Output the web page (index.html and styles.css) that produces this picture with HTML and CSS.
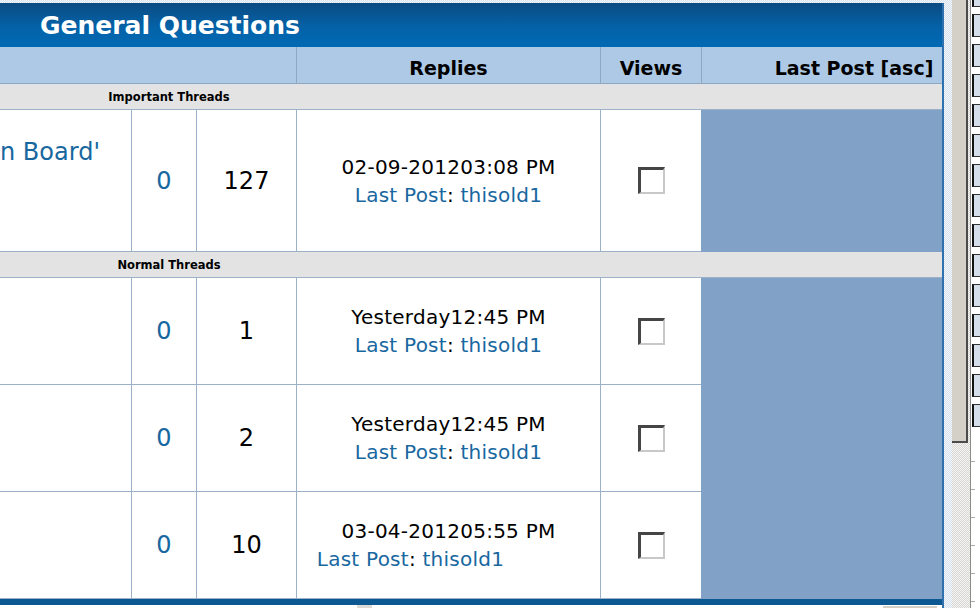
FILE: index.html
```html
<!DOCTYPE html>
<html lang="en">
<head>
    <meta charset="UTF-8">
    <title>General Questions</title>
    <link rel="stylesheet" href="styles.css">
</head>
<body>

<div class="screen">
    <div class="panel">
        <div class="panel-head">
            <h1>General Questions</h1>
        </div>

        <table class="threads">
            <colgroup>
                <col style="width:131px">
                <col style="width:65px">
                <col style="width:100px">
                <col style="width:304px">
                <col style="width:101px">
                <col style="width:241px">
            </colgroup>
            <thead>
                <tr>
                    <th colspan="3"></th>
                    <th>Replies</th>
                    <th>Views</th>
                    <th class="sort">Last Post [asc]</th>
                </tr>
            </thead>
            <tbody>
                <tr class="section">
                    <td colspan="6"><span>Important Threads</span></td>
                </tr>
                <tr class="row row-sticky">
                    <td class="cell title"><a href="#">n Board'</a></td>
                    <td class="cell num"><a href="#">0</a></td>
                    <td class="cell num">127</td>
                    <td class="cell lastpost">
                        <div class="when">02-09-2012<span>03:08 PM</span></div>
                        <div class="by"><a href="#">Last Post</a>: <a href="#">thisold1</a></div>
                    </td>
                    <td class="cell pick"><input type="checkbox"></td>
                    <td class="fill"></td>
                </tr>

                <tr class="section">
                    <td colspan="6"><span>Normal Threads</span></td>
                </tr>
                <tr class="row">
                    <td class="cell title"></td>
                    <td class="cell num"><a href="#">0</a></td>
                    <td class="cell num">1</td>
                    <td class="cell lastpost">
                        <div class="when">Yesterday<span>12:45 PM</span></div>
                        <div class="by"><a href="#">Last Post</a>: <a href="#">thisold1</a></div>
                    </td>
                    <td class="cell pick"><input type="checkbox"></td>
                    <td class="fill"></td>
                </tr>
                <tr class="row">
                    <td class="cell title"></td>
                    <td class="cell num"><a href="#">0</a></td>
                    <td class="cell num">2</td>
                    <td class="cell lastpost">
                        <div class="when">Yesterday<span>12:45 PM</span></div>
                        <div class="by"><a href="#">Last Post</a>: <a href="#">thisold1</a></div>
                    </td>
                    <td class="cell pick"><input type="checkbox"></td>
                    <td class="fill"></td>
                </tr>
                <tr class="row">
                    <td class="cell title"></td>
                    <td class="cell num"><a href="#">0</a></td>
                    <td class="cell num">10</td>
                    <td class="cell lastpost">
                        <div class="when">03-04-2012<span>05:55 PM</span></div>
                        <div class="by by-offset"><a href="#">Last Post</a>: <a href="#">thisold1</a></div>
                    </td>
                    <td class="cell pick"><input type="checkbox"></td>
                    <td class="fill"></td>
                </tr>
            </tbody>
        </table>

        <div class="panel-foot"></div>
        <div class="panel-bottom">
            <div class="stub stub-small"></div>
            <div class="stub stub-button"></div>
        </div>
    </div>

    <div class="edge">
        <div class="edge-dots"></div>
        <div class="edge-track">
            <div class="thumb"></div>
        </div>
        <div class="tray">
            <div class="tray-box"></div>
            <div class="tray-box"></div>
            <div class="tray-box"></div>
            <div class="tray-box"></div>
            <div class="tray-box"></div>
            <div class="tray-box"></div>
            <div class="tray-box"></div>
            <div class="tray-box"></div>
            <div class="tray-box"></div>
            <div class="tray-box"></div>
            <div class="tray-box"></div>
            <div class="tray-box"></div>
            <div class="tray-box"></div>
            <div class="tray-box"></div>
            <div class="tray-box"></div>
            <div class="tray-tick"></div>
            <div class="tray-tick"></div>
            <div class="tray-tick"></div>
            <div class="tray-tick"></div>
            <div class="tray-tick"></div>
            <div class="tray-tick"></div>
            <div class="tray-tick"></div>
            <div class="tray-tick"></div>
        </div>
    </div>
</div>

</body>
</html>
```

FILE: styles.css
```css
body {
    margin: 0;
    font-family: "DejaVu Sans", Verdana, sans-serif;
    background: repeating-conic-gradient(#d6e1ed 0 25%, #f4f7fb 0 50%) 0 0 / 2px 2px;
}
a {
    color: #18679f;
    text-decoration: none;
}
.screen {
    display: flex;
    height: 608px;
    overflow: hidden;
}

/* forum panel */
.panel {
    width: 942px;
    flex: none;
    margin-top: 3px;
    border-right: 2px solid #2f70ae;
    background: #fff;
    display: flex;
    flex-direction: column;
}
.panel-head {
    height: 44px;
    flex: none;
    display: flex;
    align-items: center;
    padding-left: 40px;
    background: linear-gradient(#0b4b82, #0462a8 55%, #006ab4);
}
.panel-head h1 {
    margin: 0;
    color: #fff;
    font-size: 25px;
    font-weight: bold;
}
.threads {
    width: 942px;
    flex: none;
    table-layout: fixed;
    border-collapse: separate;
    border-spacing: 0;
}
.threads th {
    height: 31px;
    padding: 5px 0 0;
    background: #adc9e6;
    border-bottom: 1px solid #8ea8c3;
    font-size: 19px;
    font-weight: bold;
    color: #000;
    text-align: center;
}
.threads th + th {
    border-left: 1px solid #8ea8c3;
}
.threads th.sort {
    padding-left: 64px;
}
.section td {
    height: 25px;
    padding: 0;
    background: #e3e3e3;
    border-bottom: 1px solid #9cb0c8;
    font-size: 11.5px;
    font-weight: bold;
    color: #000;
}
.section span {
    display: inline-block;
    width: 338px;
    text-align: center;
}
.cell {
    padding: 0;
    border-bottom: 1px solid #9cb0c8;
    text-align: center;
    vertical-align: middle;
    color: #000;
}
.cell + .cell {
    border-left: 1px solid #9cb0c8;
}
.row td {
    height: 106px;
}
.row-sticky td {
    height: 141px;
}
.title {
    vertical-align: top;
    text-align: left;
    font-size: 24px;
    line-height: 28px;
}
.row-sticky .title a {
    display: block;
    margin-top: 28px;
}
.num {
    font-size: 24px;
}
.lastpost {
    font-size: 20px;
    line-height: 28px;
    letter-spacing: 0.25px;
}
.by-offset {
    padding-right: 76px;
}
.pick input {
    appearance: none;
    display: block;
    margin: 0 auto;
    width: 27px;
    height: 27px;
    box-sizing: border-box;
    border-style: solid;
    border-width: 3px 2px 2px 3px;
    border-color: #454545 #c8c8c8 #c8c8c8 #454545;
    background: #fff;
}
.fill {
    background: #81a1c6;
    padding: 0;
}
.panel-foot {
    height: 6px;
    flex: none;
    background: #0b5893;
}
.panel-bottom {
    flex: 1;
    display: flex;
    align-items: flex-start;
    background: #fff;
}
.stub-small {
    width: 15px;
    height: 4px;
    margin-left: 357px;
    background: #dedbd6;
}
.stub-button {
    width: 54px;
    height: 8px;
    margin: 1px 0 0 511px;
    background: #d4d0c8;
}

/* right edge: desktop scroll strip */
.edge {
    flex: 1;
    display: flex;
}
.edge-dots {
    width: 8px;
}
.edge-track {
    width: 18px;
    background: repeating-conic-gradient(#d8d6d2 0 25%, #f5f4f2 0 50%) 0 0 / 2px 2px;
}
.thumb {
    width: 14px;
    height: 441px;
    background: #d4d0c8;
    border-right: 2px solid #4b4b4b;
    border-bottom: 2px solid #4b4b4b;
}
.tray {
    flex: 1;
    border-left: 1px solid #8c8c8c;
    background: #fff;
    margin-top: -16px;
}
.tray-box {
    height: 21px;
    margin: 0 0 7px 1px;
    border-left: 2px solid #111;
    border-top: 1px solid #333;
    border-bottom: 1px solid #333;
    background: #d3deea;
}
.tray-tick {
    width: 4px;
    height: 27px;
    border-bottom: 1px solid #a8a8a8;
}
```
